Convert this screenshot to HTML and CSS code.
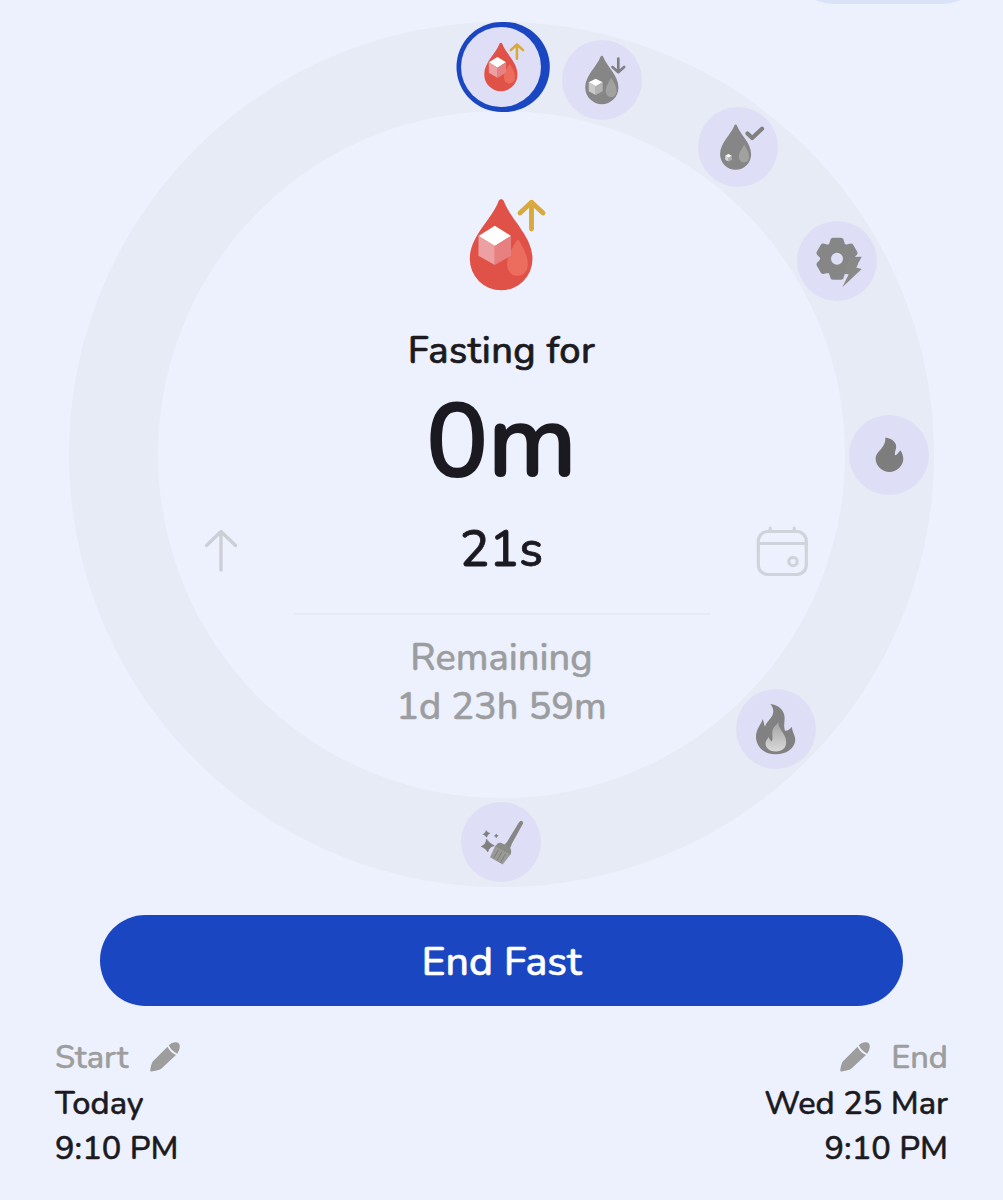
FILE: index.html
```html
<!DOCTYPE html>
<html lang="en">
<head>
    <meta charset="UTF-8">
    <meta name="viewport" content="width=device-width, initial-scale=1.0">
    <title>Fasting Timer</title>
    <link rel="stylesheet" href="styles.css">
</head>
<body>
    <header class="top-bar">
        <div class="top-pill"></div>
    </header>

    <main class="dial">
        <div class="drop-icon">
            <svg width="92" height="94" viewBox="-12.8 0 92 94">
                <use href="#drop" fill="#e05248"/>
                <use href="#drop-details"/>
            </svg>
        </div>
        <div class="label">Fasting for</div>
        <div class="minutes">0m</div>
        <div class="seconds-row">
            <svg width="52" height="52" viewBox="0 0 52 52" fill="none" stroke="#cccfd6" stroke-width="3.4" stroke-linecap="round" stroke-linejoin="round">
                <path d="M26 45V7M11.5 20.5L26 6.5l14.500 14"/>
            </svg>
            <span class="seconds">21s</span>
            <svg width="52" height="52" viewBox="0 0 52 52" fill="none" stroke="#d0d3da" stroke-width="3.2" stroke-linecap="round">
                <rect x="2.300" y="6.500" width="48" height="43" rx="9.500"/>
                <path d="M2.500 18.500h47.500M14.200 3v3M38.200 3v3"/>
                <circle cx="37" cy="36.500" r="4.200"/>
            </svg>
        </div>
        <div class="divider"></div>
        <div class="remaining">Remaining</div>
        <div class="remaining time-left">1d 23h 59m</div>

        <svg class="progress" width="865" height="865" viewBox="0 0 865 865">
            <path d="M432.500 45h3.300" fill="none" stroke="#1b46c2" stroke-width="90" stroke-linecap="round"/>
        </svg>

        <!-- fasting stages, placed around the ring -->
        <div class="stage stage-rise">
            <svg width="80" height="80" viewBox="0 0 80 80">
                <g transform="translate(22.700 15.200) scale(.53)">
                    <use href="#drop" fill="#e05248"/>
                    <use href="#drop-details"/>
                </g>
            </svg>
        </div>
        <div class="stage stage-fall">
            <svg width="80" height="80" viewBox="0 0 80 80">
                <use href="#drop" fill="#868686" transform="translate(22.700 15.200) scale(.53)"/>
                <path d="M49.300 37.700c2 4 5.300 8 5.300 13.300 0 8-10.800 8-10.800 0 0-5.300 3.500-9.300 5.500-13.300z" fill="#a1a1a0"/>
                <path d="M33.700 38.700l7 3.600-7 4-7-4z" fill="#fff"/>
                <path d="M26.700 42.300l7 4V55l-7-3.700z" fill="#c9c9c9"/>
                <path d="M40.700 42.300l-7 4V55l7-3.700z" fill="#b3b3b3"/>
                <path d="M56.300 18.500V32M50.500 27l5.800 5.300 5.800-5.300" fill="none" stroke="#808080" stroke-width="2.700" stroke-linecap="round" stroke-linejoin="round"/>
            </svg>
        </div>
        <div class="stage stage-normal">
            <svg width="80" height="80" viewBox="0 0 80 80">
                <use href="#drop" fill="#868686" transform="translate(21.600 17) scale(.495)"/>
                <path d="M46.300 37.700c2 3.500 4.800 7.500 4.800 12.300 0 7.200-10.200 7.200-10.200 0 0-4.800 3.400-8.800 5.400-12.300z" fill="#a1a1a0"/>
                <path d="M30.500 47l3.300 1.800-3.300 2-3.300-2z" fill="#fff"/>
                <path d="M27.200 48.800l3.300 2v3.700l-3.300-1.800z" fill="#d5d5d5"/>
                <path d="M33.800 48.800l-3.300 2v3.700l3.300-1.800z" fill="#b3b3b3"/>
                <path d="M49.500 26.500l4.700 4.500 9.800-9.300" fill="none" stroke="#808080" stroke-width="4.200" stroke-linecap="round" stroke-linejoin="round"/>
            </svg>
        </div>
        <div class="stage stage-switch">
            <svg width="80" height="80" viewBox="0 0 80 80">
                <g transform="translate(40 37.700)" fill="#868686">
                    <circle r="11.200" fill="none" stroke="#868686" stroke-width="10.400"/>
                    <path id="tooth" d="M-9.500-13Q-7.500-14.500-7-17.500-6.500-21-4-21h8q2.500 0 3 3.500Q7.500-14.500 9.500-13L6-10H-6z"/>
                    <use href="#tooth" transform="rotate(60)"/>
                    <use href="#tooth" transform="rotate(120)"/>
                    <use href="#tooth" transform="rotate(180)"/>
                    <use href="#tooth" transform="rotate(240)"/>
                    <use href="#tooth" transform="rotate(300)"/>
                </g>
                <path d="M52.500 36l12.200-.3-5.700 10.800 5.700 1.500-19.400 18.300 6.400-13-4.700-.3z" fill="#898988"/>
            </svg>
        </div>
        <div class="stage stage-burn">
            <svg width="80" height="80" viewBox="0 0 80 80">
                <path d="M36.300 22.500C43 23 48.500 28 47 33.500c-1 3.500-1.500 5.500-1 6.700 2 .1 3.500-2.700 5-4.700 1.500.5 3.300 4.500 3.300 8.800a13.900 13.900 0 0 1-27.700 0C26.600 38 31 36 33.500 32c2.500-3.500 3-6 2.800-9.500z" fill="#7d7d7d"/>
            </svg>
        </div>
        <div class="stage stage-ketosis">
            <svg width="80" height="80" viewBox="0 0 80 80">
                <defs>
                    <linearGradient id="flame" x1="0" y1="0" x2="0" y2="1">
                        <stop offset="0" stop-color="#a2a2a2"/>
                        <stop offset="1" stop-color="#d9d9d9"/>
                    </linearGradient>
                </defs>
                <path d="M34.300 15C43 16 49 21.500 48.600 30c-.2 4-1 8.500.4 11.700 3 .3 5-2 7-4 0 5.300 3.300 8.300 3.300 13.300C58.500 60 50 65.300 39.700 65.300 28 65.300 20 57.500 20 47.700c0-7.500 4.500-11 6.700-17.400 1.300 2 1 5 2.300 7.400 1.500-6.200 8.500-8.700 8.300-15.700-.1-3-1.300-5-3-7z" fill="#818181"/>
                <path d="M42.300 32.700c-.8 7 7.900 12 7.900 20.300 0 6-4.200 9.500-10.200 9.500S29.500 59 29.500 54.500c0-2.500 1.700-4 3-6.500 1.300 1.500 1.300 3.500 3.300 4.500 2-5-1-8.500 1.700-13.500 1.500-2.500 3.800-3.800 4.800-6.300z" fill="url(#flame)"/>
            </svg>
        </div>
        <div class="stage stage-cleanup">
            <svg width="80" height="80" viewBox="0 0 80 80">
                <path d="M58 20.200q1.800-2.500 3.300-1t.2 3.200L51 41.500l-2 5-6-3.500 3-3z" fill="#868686"/>
                <path d="M34.300 43.500l15.700 8.300-8.300 10.700L29 55.300z" fill="#999996"/>
                <path d="M34.500 44.500q2-5 6-3.500l7.500 4q3.500 2 1.500 7.500z" fill="#8b8b85"/>
                <path d="M37.500 48l-5 8.500M41 50l-5 8.500M44.500 52l-5 8.500" stroke="#7d7d7b" stroke-width="1" fill="none"/>
                <path d="M25.500 37q2.200 4 7.800 6.700-5 .8-6.500 6.300-2-4-6.600-5.500 4.800-1.800 5.300-7.500z" fill="#7f7f7d" stroke="#7f7f7d" stroke-width=".6"/>
                <path d="M25 28q1.200 2.500 4.300 3.300-3 1-3.600 4.500-1.500-2.700-4.400-3.500 3.200-1 3.700-4.300z" fill="#7f7f7d"/>
                <path d="M35.200 31.500q.6 1.700 2.500 2.300-1.900.6-2.400 2.500-.6-1.900-2.500-2.400 1.900-.6 2.400-2.400z" fill="#7f7f7d"/>
            </svg>
        </div>
    </main>

    <button class="end-button">End Fast</button>

    <footer class="times">
        <div class="time">
            <div class="time-head">
                <span class="start-label">Start</span>
                <svg width="30" height="30" viewBox="0 0 30 30"><use href="#pencil"/></svg>
            </div>
            <div class="today">Today</div>
            <div class="clock">9:10 PM</div>
        </div>
        <div class="time time-end">
            <div class="time-head">
                <svg width="30" height="30" viewBox="0 0 30 30"><use href="#pencil"/></svg>
                <span class="end-label">End</span>
            </div>
            <div class="date">Wed 25 Mar</div>
            <div class="clock">9:10 PM</div>
        </div>
    </footer>

    <!-- shared icon shapes -->
    <svg class="shapes" width="0" height="0">
        <defs>
            <path id="drop" d="M29.800 3C30.800.5 34 .5 35 3c7 19 28.700 35 28.700 58A31.300 31.300 0 0 1 1 61C1 38 22.800 22 29.800 3z"/>
            <g id="drop-details">
                <path d="M47.500 43q1.500-2 3 0C54 50 59 56 59 66.500c0 15-20.700 15-20.700 0C38.300 56 44 50 47.500 43z" fill="#ec6c5d"/>
                <path d="M26 27.700L42.200 38 26 48 9.700 38z" fill="#fff"/>
                <path d="M9.700 38L26 48v19L9.700 57.700z" fill="#eda0a2"/>
                <path d="M42.200 38L26 48v19l16.200-9.300z" fill="#e78080"/>
                <path d="M62.700 31V4.300M51.200 15L62.700 4.300 74.200 15" fill="none" stroke="#d8a93c" stroke-width="4.900" stroke-linecap="round" stroke-linejoin="round"/>
            </g>
            <g id="pencil" fill="#9d9d9d">
                <path d="M.2 28.500Q.5 24 2.200 20.500q.5-1 1.300-1.800L17.500 4.800q2.500 5.500 8.500 8.200L11.500 26.500q-1 .8-2.200 1.200-3.500 1.300-7.800 1.800-1.300.1-1.300-1z"/>
                <path d="M18.800 3.300Q22-.3 26 .2q3.500.3 3.800 3.800.2 4-2.600 7.700-6-2.900-8.400-8.400z"/>
            </g>
        </defs>
    </svg>
</body>
</html>
```
FILE: styles.css
```css
body {
    margin: 0;
    height: 1200px;
    overflow: hidden;
    background-color: #edf1fd;
    font-family: 'Nunito', 'Lato', sans-serif;
    font-weight: 500;
    color: #1c1a21;
    -webkit-text-stroke: 0.5px currentColor;
}

svg {
    display: block;
}

.top-bar {
    display: flex;
    justify-content: flex-end;
    height: 22px;
    padding-right: 20px;
}

.top-pill {
    width: 190px;
    height: 80px;
    margin-top: -76.5px;
    border-radius: 40px;
    background-color: #d9e3f8;
}

/* Timer ring */
.dial {
    position: relative;
    box-sizing: border-box;
    width: 865px;
    height: 865px;
    margin: 0 auto;
    border: 89.5px solid #e6ebf5;
    border-radius: 50%;
    display: flex;
    flex-direction: column;
    align-items: center;
    white-space: nowrap;
}

.drop-icon {
    margin-top: 87px;
    height: 128px;
}

.label {
    font-size: 38px;
    line-height: 50px;
    letter-spacing: 0.4px;
    -webkit-text-stroke-width: 0.7px;
}

.minutes {
    font-size: 103px;
    line-height: 120px;
    margin-top: 5px;
    -webkit-text-stroke-width: 2.2px;
}

.seconds-row {
    display: grid;
    grid-template-columns: 52px 1fr 52px;
    align-items: center;
    width: 613px;
    height: 60px;
    margin-top: 19px;
}

.seconds-row svg {
    margin-top: 1px;
}

.seconds {
    font-size: 49.5px;
    line-height: 60px;
    text-align: center;
    -webkit-text-stroke-width: 0.8px;
}

.divider {
    width: 416px;
    height: 2px;
    margin-top: 33px;
    background-color: #e6eaf5;
}

.remaining {
    font-size: 38px;
    line-height: 49px;
    color: #9c9da0;
}

.divider + .remaining {
    margin-top: 18px;
}

.progress {
    position: absolute;
    top: -89.5px;
    left: -89.5px;
}

/* Stages */
.stage {
    position: absolute;
    width: 80px;
    height: 80px;
    border-radius: 50%;
    background-color: #dedff7;
}

.stage-rise {
    left: 303px;
    top: -84.5px;
}

.stage-fall {
    left: 403.5px;
    top: -71.5px;
}

.stage-normal {
    left: 539.5px;
    top: -4.5px;
}

.stage-switch {
    left: 639px;
    top: 109.5px;
}

.stage-burn {
    left: 691px;
    top: 303.5px;
}

.stage-ketosis {
    left: 577.5px;
    top: 577.5px;
}

.stage-cleanup {
    left: 302.5px;
    top: 691px;
}

.end-button {
    display: block;
    width: 803px;
    height: 91px;
    margin: 28px auto 0;
    padding: 1px 0 0;
    border: none;
    border-radius: 46px;
    background-color: #1b46c2;
    color: #fff;
    font-family: inherit;
    font-size: 41px;
    font-weight: 500;
    -webkit-text-stroke: 0.6px currentColor;
    cursor: pointer;
}

/* Start and end times */
.times {
    display: flex;
    justify-content: space-between;
    margin-top: 29px;
    padding: 0 55px;
    font-size: 32.6px;
    line-height: 45.5px;
}

.time-end {
    text-align: right;
}

.time-head {
    display: flex;
    align-items: center;
    gap: 21px;
    color: #9d9d9d;
}

.time-head svg {
    margin-top: -2px;
}

.time-end .time-head {
    justify-content: flex-end;
}
```
